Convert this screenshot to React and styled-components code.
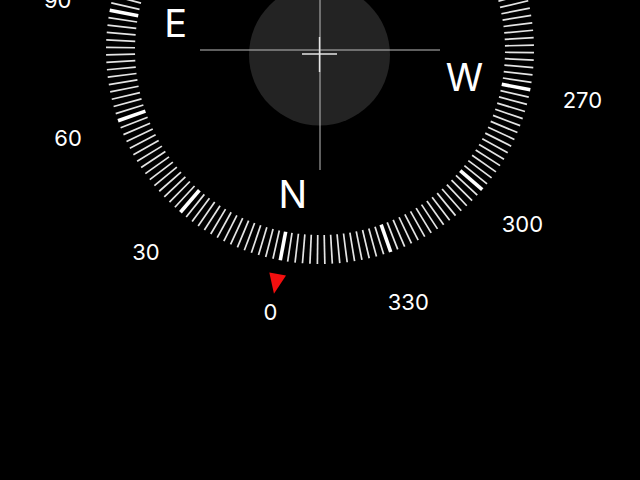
import React from 'react'
import styled, { createGlobalStyle } from 'styled-components'

const GlobalStyle = createGlobalStyle`
  html, body {
    margin: 0;
    padding: 0;
    background: #000;
  }
  body {
    font-family: Inter, "Liberation Sans", sans-serif;
  }
`

const Screen = styled.div`
  width: 640px;
  height: 480px;
  background: #000;
  overflow: hidden;
  display: flex;
`

const Dial = styled.svg`
  display: block;
  width: 640px;
  height: 480px;
`

const Tick = styled.line`
  stroke: ${p => (p.$major ? '#ffffff' : '#e4e4e4')};
  stroke-width: ${p => (p.$major ? 3.6 : 1.7)};
`

const Hair = styled.line`
  stroke: ${p => p.$color || '#bdbdbd'};
  stroke-width: ${p => p.$w || 1};
`

const Bubble = styled.circle`
  fill: #232323;
`

const Marker = styled.polygon`
  fill: #f40f0f;
`

const Label = styled.text`
  fill: #fff;
  font-family: Inter, "Liberation Sans", sans-serif;
  font-size: ${p => p.$size}px;
  font-weight: ${p => p.$weight || 400};
  text-anchor: middle;
  dominant-baseline: central;
`

const CX = 320
const CY = 50
const ROT = 190.7

// bearing -> screen point, card turned by ROT
const place = (bearing, r) => {
  const a = ((bearing + ROT) * Math.PI) / 180
  return { x: CX + r * Math.sin(a), y: CY - r * Math.cos(a) }
}

const ticks = Array.from({ length: 180 }, (_, i) => i * 2)
// only the numbers that land inside the window
const numbers = [0, 30, 60, 90, 270, 300, 330]
const letters = [
  { t: 'N', b: 0 },
  { t: 'E', b: 90 },
  { t: 'W', b: 270 }
]

export default function App() {
  return (
    <Screen>
      <GlobalStyle />
      <Dial viewBox="0 0 640 480">
        <Bubble cx={319.5} cy={55} r={70.5} />

        <g transform={`rotate(${ROT} ${CX} ${CY})`}>
          {ticks.map(b => (
            <Tick
              key={b}
              $major={b % 30 === 0}
              x1={CX}
              y1={CY - 185}
              x2={CX}
              y2={CY - 214}
              transform={`rotate(${b} ${CX} ${CY})`}
            />
          ))}
          <Marker
            points={`${CX - 8.5},${CY - 228} ${CX + 8.5},${CY - 228} ${CX},${CY - 248}`}
          />
        </g>

        <Hair x1={CX} y1={0} x2={CX} y2={170} />
        <Hair x1={200} y1={CY} x2={440} y2={CY} />
        <Hair $color="#e6e6e6" $w={1.4} x1={302} y1={54} x2={337} y2={54} />
        <Hair $color="#e6e6e6" $w={1.4} x1={319.5} y1={37} x2={319.5} y2={72} />

        {letters.map(l => {
          const p = place(l.b, 147)
          return (
            <Label key={l.t} x={p.x} y={p.y} $size={38}>
              {l.t}
            </Label>
          )
        })}

        {numbers.map(n => {
          const p = place(n, 267)
          return (
            <Label key={n} x={p.x} y={p.y} $size={22}>
              {n}
            </Label>
          )
        })}
      </Dial>
    </Screen>
  )
}
